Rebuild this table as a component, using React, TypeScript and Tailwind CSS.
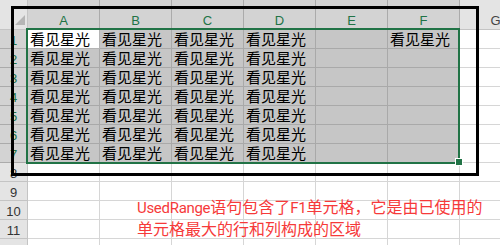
import React from 'react';

const COLS = ['A', 'B', 'C', 'D', 'E', 'F', 'G'];
const ROWS = [1, 2, 3, 4, 5, 6, 7, 8, 9, 10, 11, 12];
const TXT = '看见星光';

function cellText(r: number, c: number): string {
  if (r <= 7 && c <= 3) return TXT;
  if (r === 1 && c === 5) return TXT;
  return '';
}

function cellClass(r: number, c: number): string {
  const base =
    "pl-[2px] text-[15px] leading-[18px] whitespace-nowrap overflow-visible text-black border-r border-b font-['Noto_Sans_CJK_SC',sans-serif]";
  const sel = r <= 7 && c <= 5;
  if (sel && r === 1 && c === 0) return base + ' bg-white border-[#b4b4b4]';
  if (sel) return base + ' bg-[#c6c6c6] border-[#a9a9a9]';
  return base + ' bg-white border-[#d6d6d6]';
}

export default function App() {
  return (
    <div className="relative w-[500px] h-[245px] overflow-hidden bg-white font-['Liberation_Sans','Noto_Sans_CJK_SC',sans-serif]">
      <div className="grid grid-cols-[28px_repeat(7,72px)] grid-rows-[30px_repeat(12,19px)] w-max">
        {/* corner */}
        <div className="relative bg-[#e4e4e4] border-r border-b border-[#c4c4c4]">
          <svg className="absolute right-[2px] bottom-[4px]" width="10" height="10" viewBox="0 0 10 10">
            <polygon points="10,0 10,10 0,10" fill="#b5b5b5" />
          </svg>
        </div>
        {COLS.map((col, c) => (
          <div
            key={col}
            className={
              c <= 5
                ? 'flex items-end justify-center text-[13px] leading-[16px] border-r border-b bg-[#d3d3d3] text-[#217346] border-[#ababab]'
                : 'flex items-end justify-center text-[13px] leading-[16px] border-r border-b bg-[#e4e4e4] text-[#444444] border-[#c4c4c4]'
            }
          >
            {col}
          </div>
        ))}
        {ROWS.map((r) => (
          <React.Fragment key={r}>
            <div
              className={
                r <= 7
                  ? 'flex items-end justify-center text-[13px] leading-[15px] border-r border-b bg-[#d3d3d3] text-[#217346] border-[#ababab]'
                  : 'flex items-end justify-center text-[13px] leading-[15px] border-r border-b bg-[#e4e4e4] text-[#333333] border-[#c4c4c4]'
              }
            >
              {r}
            </div>
            {COLS.map((col, c) => (
              <div key={col + r} className={cellClass(r, c)}>
                {cellText(r, c)}
              </div>
            ))}
          </React.Fragment>
        ))}
      </div>

      {/* selection outline */}
      <div className="absolute left-[26px] top-[28px] w-[434px] h-[136px] border-2 border-[#217346]" />
      <div className="absolute left-[455px] top-[158px] w-[8px] h-[8px] bg-[#217346] border border-white" />

      {/* black annotation frame */}
      <div className="absolute left-[11px] top-[6px] w-[468px] h-[170px] border-[3px] border-black" />

      {/* red annotation text */}
      <div className="absolute left-[137px] top-[196px] text-[#f63a3a] text-[16px] leading-[20px] whitespace-nowrap font-['Noto_Sans_CJK_SC',sans-serif]">
        <div>
          <span className="font-['Roboto',sans-serif] text-[15px] tracking-[-0.3px]">UsedRange</span>
          语句包含了
          <span className="font-['Roboto',sans-serif] text-[15px] tracking-[-0.3px]">F1</span>
          单元格，它是由已使用的
        </div>
        <div>单元格最大的行和列构成的区域</div>
      </div>
    </div>
  );
}
